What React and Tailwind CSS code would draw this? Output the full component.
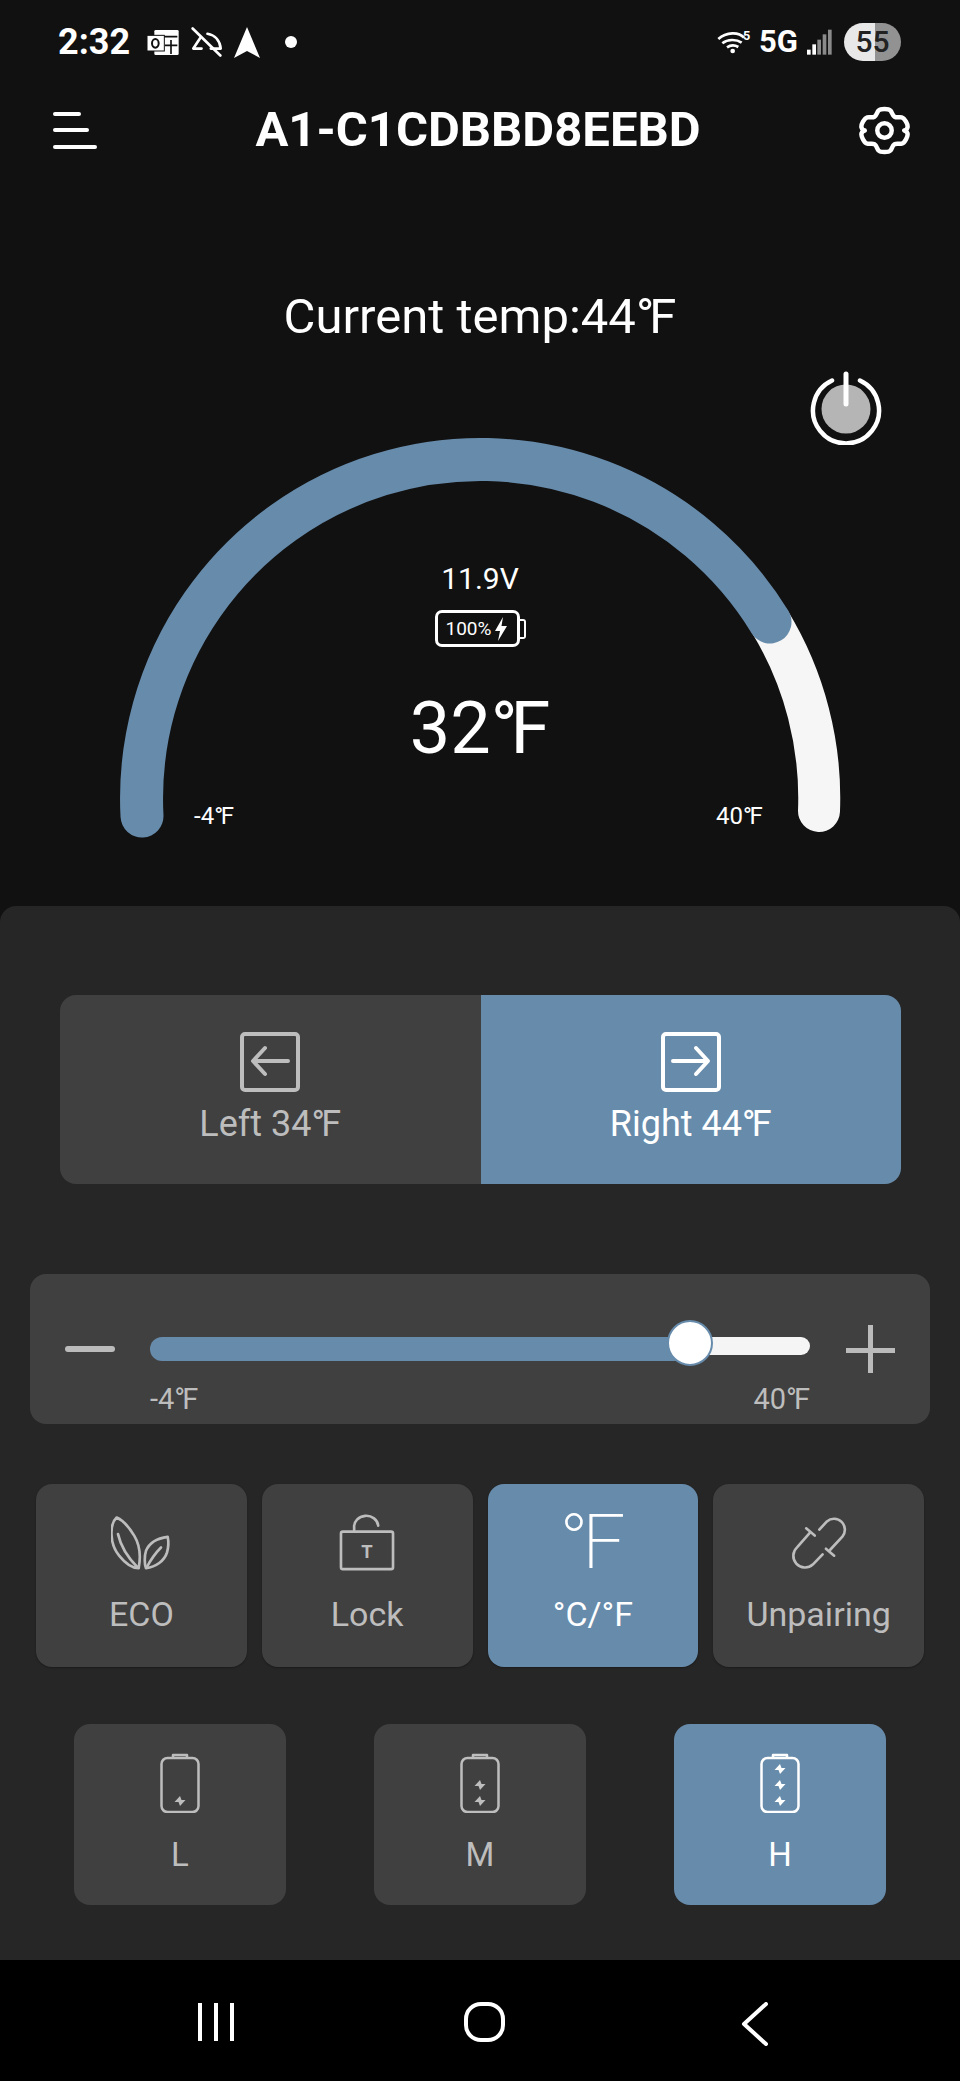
const BLUE = '#678bab';

// degree sign set a little tighter, the app draws the unit as one glyph
const Deg = ({ children }) => (
  <>
    {children}
    <span className="tracking-[-0.1em]">°</span>F
  </>
);

const OutlookIcon = () => (
  <svg width="32" height="27" viewBox="440 85 96 81">
    <rect x="462" y="88" width="73" height="75" fill="#fff" rx="4" />
    <path d="M466 108H531M512 118V160M494 134H531" stroke="#111" strokeWidth="5" />
    <rect x="440" y="104" width="52" height="47" fill="#fff" stroke="#111" strokeWidth="3" />
    <ellipse cx="465" cy="128" rx="10" ry="13" fill="none" stroke="#111" strokeWidth="6" />
  </svg>
);

const AlarmOffIcon = () => (
  <svg width="31" height="30" viewBox="566 84 94 90" fill="none" stroke="#fff" strokeWidth="8" strokeLinecap="round" strokeLinejoin="round">
    <path d="M616 104C640 108 654 126 656 149H626" />
    <path d="M598 149H573L594 117" />
    <path d="M571 88L655 170" />
  </svg>
);

const WifiIcon = () => (
  <svg width="36" height="26" viewBox="112 86 108 78" fill="none">
    <path d="M116 116C140 94 178 94 193 112" stroke="#fff" strokeWidth="8" />
    <path d="M128 129C144 116 170 116 186 127" stroke="#fff" strokeWidth="8" />
    <path d="M142 141C152 134 166 134 176 140" stroke="#fff" strokeWidth="8" />
    <circle cx="159" cy="152" r="7" fill="#fff" />
    <text x="190" y="119" fill="#fff" fontSize="38" fontWeight="700">5</text>
  </svg>
);

const SignalIcon = () => (
  <svg width="26" height="26" viewBox="378 86 78 78">
    <rect x="381" y="148" width="11" height="15" fill="#fff" />
    <rect x="397" y="132" width="11" height="31" fill="#fff" />
    <rect x="412" y="118" width="11" height="45" fill="#8a8a8a" />
    <rect x="428" y="102" width="11" height="61" fill="#8a8a8a" />
    <rect x="444" y="88" width="11" height="75" fill="#8a8a8a" />
  </svg>
);

const StatusBar = () => (
  <div className="flex h-[84px] items-center justify-between pl-[58px] pr-[59px] text-white">
    <div className="flex items-center">
      <span className="w-[72px] text-[36px] leading-[40px] font-bold">2:32</span>
      <span className="ml-[17px]"><OutlookIcon /></span>
      <span className="ml-[12px]"><AlarmOffIcon /></span>
      <svg className="ml-[12px]" width="26" height="31" viewBox="0 0 26 31">
        <path d="M13 0L26 31L13 24L0 31Z" fill="#fff" />
      </svg>
      <span className="ml-[25px] h-[12px] w-[12px] rounded-full bg-white" />
    </div>
    <div className="flex items-center">
      <WifiIcon />
      <span className="ml-[6px] text-[31px] leading-[40px] font-bold">5G</span>
      <span className="ml-[8px]"><SignalIcon /></span>
      <span className="ml-[12px] flex h-[38px] w-[57px] items-center justify-center rounded-full bg-[linear-gradient(90deg,#e8e8e8_54%,#929292_54%)] text-[30px] leading-none font-medium text-[#222]">
        55
      </span>
    </div>
  </div>
);

const Header = () => (
  <div className="flex h-[92px] items-center justify-between pl-[53px] pr-[50px] text-white">
    <div className="flex w-[44px] flex-col gap-[12.5px]">
      <div className="h-[4px] w-[28px] rounded-full bg-white" />
      <div className="h-[4px] w-[36px] rounded-full bg-white" />
      <div className="h-[4px] w-[44px] rounded-full bg-white" />
    </div>
    <h1 className="text-[49px] leading-[60px] font-bold">A1-C1CDBBD8EEBD</h1>
    <svg width="51" height="51" viewBox="0 0 24 24" fill="none" stroke="#fff" strokeWidth="2.1" strokeLinejoin="round">
      <path d="M9.2 2.6C10.2 1.6 13.8 1.6 14.8 2.6C15.6 3.5 15.6 4.9 16.7 5.5C17.8 6.1 19 5.5 20.1 5.8C21.5 6.2 23.2 9.3 22.8 10.6C22.5 11.7 21.3 12 21.3 12C21.3 12 22.5 12.3 22.8 13.4C23.2 14.7 21.5 17.8 20.1 18.2C19 18.5 17.8 17.9 16.7 18.5C15.6 19.1 15.6 20.5 14.8 21.4C13.8 22.4 10.2 22.4 9.2 21.4C8.4 20.5 8.4 19.1 7.3 18.5C6.2 17.9 5 18.5 3.9 18.2C2.5 17.8 .8 14.7 1.2 13.4C1.5 12.3 2.7 12 2.7 12C2.7 12 1.5 11.7 1.2 10.6C.8 9.3 2.5 6.2 3.9 5.8C5 5.5 6.2 6.1 7.3 5.5C8.4 4.9 8.4 3.5 9.2 2.6Z" />
      <circle cx="12" cy="12" r="3.4" />
    </svg>
  </div>
);

const PowerButton = () => (
  <svg className="absolute left-[809px] top-[371px]" width="74" height="74" viewBox="0 0 74 74" fill="none">
    <circle cx="37" cy="38" r="24.5" fill="#b5b5b5" />
    <path d="M23 9.5A33 33 0 1 0 51 9.5" stroke="#fff" strokeWidth="4.5" strokeLinecap="round" />
    <path d="M37 3V33" stroke="#fff" strokeWidth="5" strokeLinecap="round" />
  </svg>
);

const Gauge = () => (
  <div className="relative h-[476px] w-full text-white">
    <svg className="absolute inset-0" width="960" height="476" viewBox="0 430 960 476" fill="none">
      <path d="M770 622A339 339 0 0 1 819 811" stroke="#f6f6f6" strokeWidth="42" strokeLinecap="round" />
      <path d="M142 816A339 339 0 0 1 770 622" stroke={BLUE} strokeWidth="43" strokeLinecap="round" />
    </svg>
    <div className="relative flex flex-col items-center pt-[131px]">
      <span className="text-[30px] leading-[36px]">11.9V</span>
      <div className="mt-[13px] flex h-[37px] items-center">
        <div className="flex h-[37px] w-[85px] items-center justify-center rounded-[7px] border-[3px] border-white text-[19px] leading-none">
          100%
          <svg className="ml-[3px]" width="14" height="24" viewBox="0 0 14 24">
            <path d="M9 0L1 14H6L4 24L13 9H7.5Z" fill="#fff" />
          </svg>
        </div>
        <div className="h-[20px] w-[6px] rounded-r-[3px] border-[2.5px] border-l-0 border-white" />
      </div>
      <span className="mt-[37px] text-[72px] leading-[90px]"><Deg>32</Deg></span>
    </div>
    <span className="absolute left-[194px] top-[372px] text-[24px] leading-[28px]"><Deg>-4</Deg></span>
    <span className="absolute left-[716px] top-[372px] text-[24px] leading-[28px]"><Deg>40</Deg></span>
  </div>
);

const SideIcon = ({ right }) => (
  <svg width="60" height="60" viewBox="0 0 60 60" fill="none" stroke="currentColor" strokeWidth="4" strokeLinecap="round" strokeLinejoin="round">
    <rect x="2" y="2" width="56" height="56" rx="3" />
    {right ? <path d="M12 29H46M35 16L47 29L35 42" /> : <path d="M48 29H14M25 16L13 29L25 42" />}
  </svg>
);

const SideTab = ({ right, label, active }) => (
  <button className={`flex flex-1 flex-col items-center pt-[37px] ${active ? 'bg-[#678bab] text-white' : 'bg-[#404040] text-[#bdbdbd]'}`}>
    <SideIcon right={right} />
    <span className="mt-[10px] text-[36px] leading-[44px]"><Deg>{label}</Deg></span>
  </button>
);

const TempSlider = () => (
  <div className="mx-[30px] mt-[90px] h-[150px] rounded-[16px] bg-[#404040] pt-[47px]">
    <div className="flex h-[56px] items-center pl-[35px]">
      <div className="h-[6px] w-[50px] rounded-full bg-[#bbbbbb]" />
      <div className="relative ml-[35px] flex h-[24px] w-[660px] items-start">
        <div className="h-[24px] w-[540px] rounded-l-[12px] bg-[#678bab]" />
        <div className="h-[18px] w-[120px] rounded-r-[9px] bg-[#f5f5f5]" />
        <div className="absolute left-[517px] top-[-17px] h-[46px] w-[46px] rounded-full border-2 border-[#678bab] bg-white" />
      </div>
      <div className="relative ml-[36px] h-[48px] w-[49px]">
        <div className="absolute left-0 top-[23px] h-[5px] w-[49px] bg-[#bbbbbb]" />
        <div className="absolute left-[22px] top-0 h-[48px] w-[5px] bg-[#bbbbbb]" />
      </div>
    </div>
    <div className="ml-[120px] mt-[5px] flex w-[660px] justify-between text-[29px] leading-[34px] text-[#bdbdbd]">
      <span><Deg>-4</Deg></span>
      <span><Deg>40</Deg></span>
    </div>
  </div>
);

const LeafIcon = () => (
  <svg width="60" height="57" viewBox="245 100 180 170" fill="none" stroke="currentColor" strokeWidth="8" strokeLinecap="round" strokeLinejoin="round">
    <path d="M262 110C240 130 240 190 270 225C290 250 310 262 328 262C335 225 330 190 315 165C300 140 280 118 262 110Z" />
    <path d="M266 160C275 200 300 235 325 260" />
    <path d="M415 168C385 172 360 185 350 210C345 225 345 250 350 262C380 258 405 240 413 215C418 198 418 182 415 168Z" />
    <path d="M352 260C365 235 380 215 395 200" />
  </svg>
);

const LockIcon = () => (
  <svg width="56" height="57" viewBox="926 100 170 172" fill="none" stroke="currentColor" strokeWidth="8" strokeLinecap="round" strokeLinejoin="round">
    <rect x="932" y="153" width="158" height="114" rx="6" />
    <path d="M972 150V140A36 32 0 0 1 1045 135" />
    <text x="1011" y="234" textAnchor="middle" fontSize="56" fontWeight="700" fill="currentColor" stroke="none">T</text>
  </svg>
);

const LinkIcon = () => (
  <svg width="56" height="57" viewBox="926 100 170 172" fill="none" stroke="currentColor" strokeWidth="8" strokeLinecap="round" strokeLinejoin="round">
    <path d="M1012 147L1035 122A33 33 0 0 1 1082 168L1045 208" />
    <path d="M983 157L945 200A33 33 0 0 0 992 253L1022 222" />
    <path d="M972 143L998 165" />
    <path d="M1032 205L1057 226" />
  </svg>
);

const ActionCard = ({ label, active, children }) => (
  <button className={`flex h-[183px] flex-col items-center rounded-[16px] pt-[31px] shadow-[0_1px_2px_rgba(0,0,0,0.3)] ${active ? 'bg-[#678bab] text-white' : 'bg-[#404040] text-[#bdbdbd]'}`}>
    <div className="flex h-[54px] items-center justify-center">{children}</div>
    <span className="mt-[25px] text-[34px] leading-[40px]">{label}</span>
  </button>
);

const BatteryIcon = ({ bolts }) => (
  <svg width="40" height="60" viewBox="0 0 40 60" fill="none" stroke="currentColor" strokeWidth="2.5" strokeLinejoin="round">
    <path d="M13 5V2H27V5" />
    <rect x="1.5" y="5" width="37" height="54" rx="6" />
    {[48, 32, 16].slice(0, bolts).map((y) => (
      <path key={y} d={`M20 ${y - 5}L14.5 ${y + 1}H18.5L20 ${y + 5}L25.5 ${y - 1}H21.5Z`} fill="currentColor" stroke="none" />
    ))}
  </svg>
);

const LevelCard = ({ label, bolts, active }) => (
  <button className={`flex h-[181px] w-[212px] flex-col items-center rounded-[16px] pt-[29px] ${active ? 'bg-[#678bab] text-white' : 'bg-[#404040] text-[#bdbdbd]'}`}>
    <BatteryIcon bolts={bolts} />
    <span className="mt-[22px] text-[33px] leading-[40px]">{label}</span>
  </button>
);

const NavBar = () => (
  <div className="flex h-[121px] items-start bg-black pl-[198px] pt-[42px]">
    <svg width="36" height="40" viewBox="0 0 36 40" stroke="#fff" strokeWidth="4">
      <path d="M2 1V39M18 1V39M34 1V39" />
    </svg>
    <svg className="ml-[230px]" width="41" height="40" viewBox="0 0 41 40" fill="none" stroke="#fff" strokeWidth="4">
      <rect x="2" y="2" width="37" height="36" rx="15" />
    </svg>
    <svg className="ml-[236px]" width="28" height="44" viewBox="0 0 28 44" fill="none" stroke="#fff" strokeWidth="4" strokeLinecap="round" strokeLinejoin="round">
      <path d="M25 2L3 22L25 42" />
    </svg>
  </div>
);

export default function App() {
  return (
    <div className="relative flex h-[2081px] w-[960px] flex-col overflow-hidden bg-[#111111] font-[family-name:Roboto,sans-serif]">
      <StatusBar />
      <Header />
      <PowerButton />
      <div className="mt-[111px] text-center text-[49px] leading-[60px] text-white"><Deg>Current temp:44</Deg></div>
      <div className="mt-[83px]"><Gauge /></div>

      <div className="h-[1054px] rounded-t-[16px] bg-[#262626] pt-[89px]">
        <div className="ml-[60px] mr-[59px] flex h-[189px] overflow-hidden rounded-[16px]">
          <SideTab label="Left 34" />
          <SideTab label="Right 44" right active />
        </div>

        <TempSlider />

        <div className="mt-[60px] grid grid-cols-4 gap-[15px] px-[36px]">
          <ActionCard label="ECO"><LeafIcon /></ActionCard>
          <ActionCard label="Lock"><LockIcon /></ActionCard>
          <ActionCard label="°C/°F" active>
            <span className="pr-[7px] text-[76px] leading-[54px] font-extralight tracking-[-0.08em]">°F</span>
          </ActionCard>
          <ActionCard label="Unpairing"><LinkIcon /></ActionCard>
        </div>

        <div className="mt-[57px] flex justify-between pl-[74px] pr-[74px]">
          <LevelCard label="L" bolts={1} />
          <LevelCard label="M" bolts={2} />
          <LevelCard label="H" bolts={3} active />
        </div>
      </div>

      <NavBar />
    </div>
  );
}
